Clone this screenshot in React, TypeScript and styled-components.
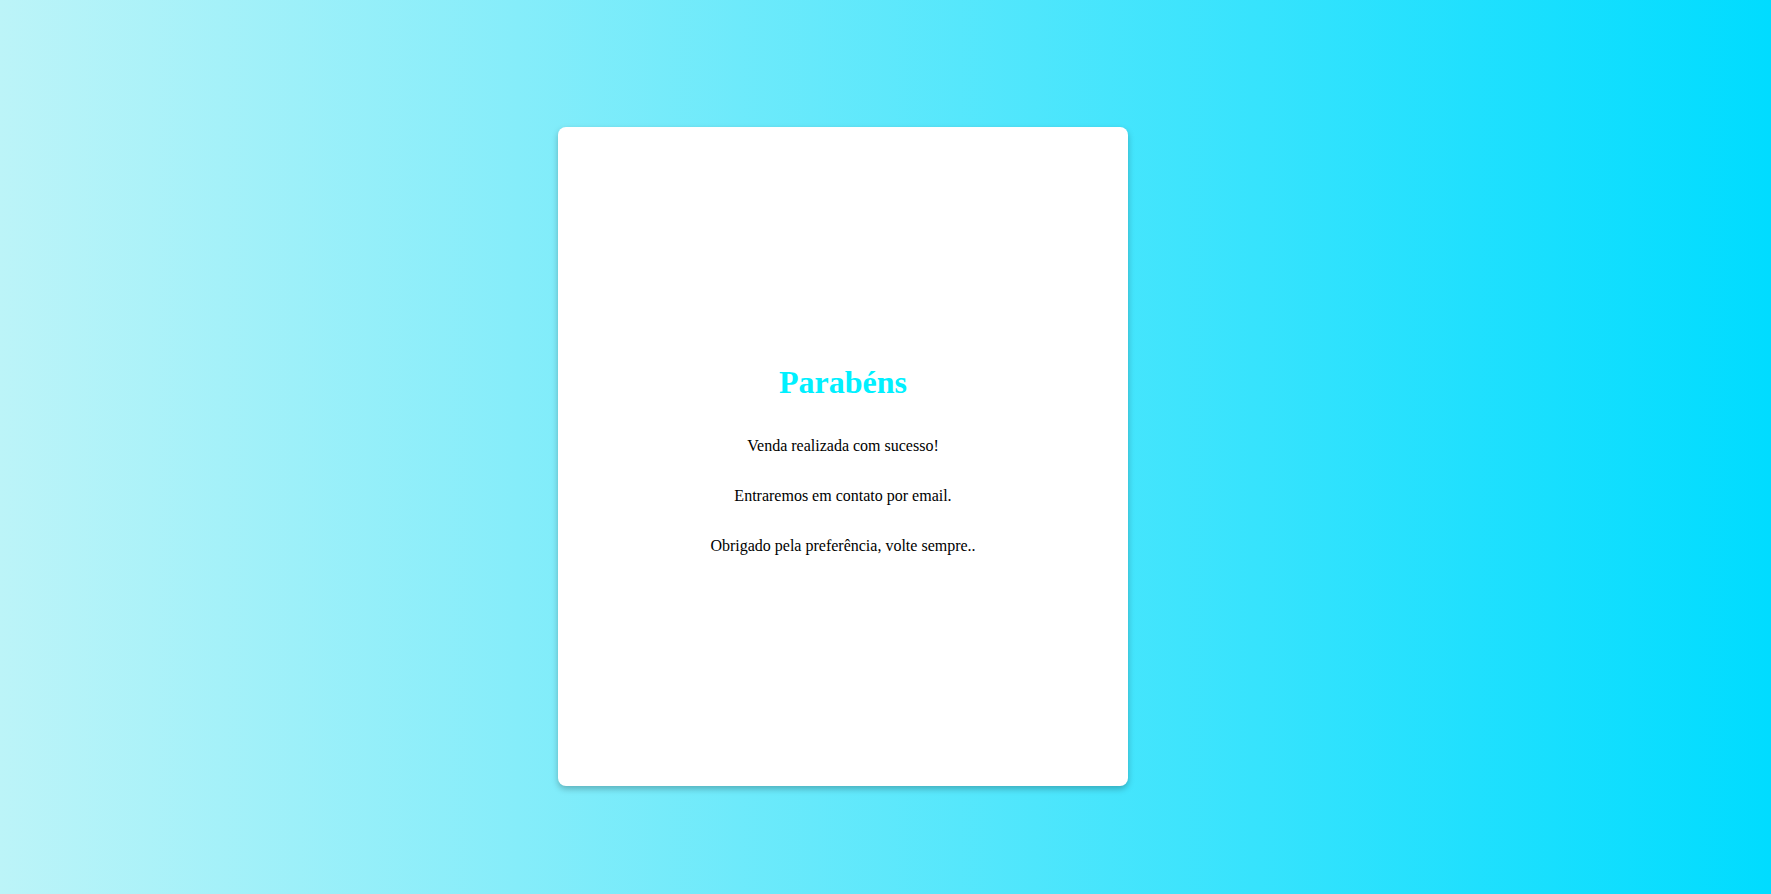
import styled, { createGlobalStyle } from 'styled-components';

const GlobalStyle = createGlobalStyle`
  html, body {
    margin: 0;
    padding: 0;
  }
  body {
    font-family: 'Liberation Serif', 'Times New Roman', serif;
  }
`;

export default function App() {
  return (
    <>
      <GlobalStyle />
      <Page>
        <Card>
          <Title>Parabéns</Title>
          <Message>Venda realizada com sucesso!</Message>
          <Message>Entraremos em contato por email.</Message>
          <Message>Obrigado pela preferência, volte sempre..</Message>
        </Card>
      </Page>
    </>
  );
}

const Page = styled.div`
  width: 100vw;
  height: 100vh;
  display: flex;
  justify-content: center;
  align-items: center;
  background: linear-gradient(90deg, #bcf4f8 0%, #00dcff 100%);
  overflow: hidden;
`;

const Card = styled.div`
  box-sizing: border-box;
  width: 570px;
  height: 659px;
  margin-top: 19px;
  margin-left: -85px;
  padding-top: 5px;
  background: #fff;
  border-radius: 8px;
  box-shadow: 0 3px 6px rgba(0, 0, 0, 0.25);
  display: flex;
  flex-direction: column;
  align-items: center;
  justify-content: center;
  gap: 32px;
`;

const Title = styled.h1`
  margin: 0 0 4px;
  font-size: 32px;
  font-weight: 700;
  color: #00f0ff;
`;

const Message = styled.p`
  margin: 0;
  font-size: 16px;
  line-height: 18px;
  color: #000;
`;
